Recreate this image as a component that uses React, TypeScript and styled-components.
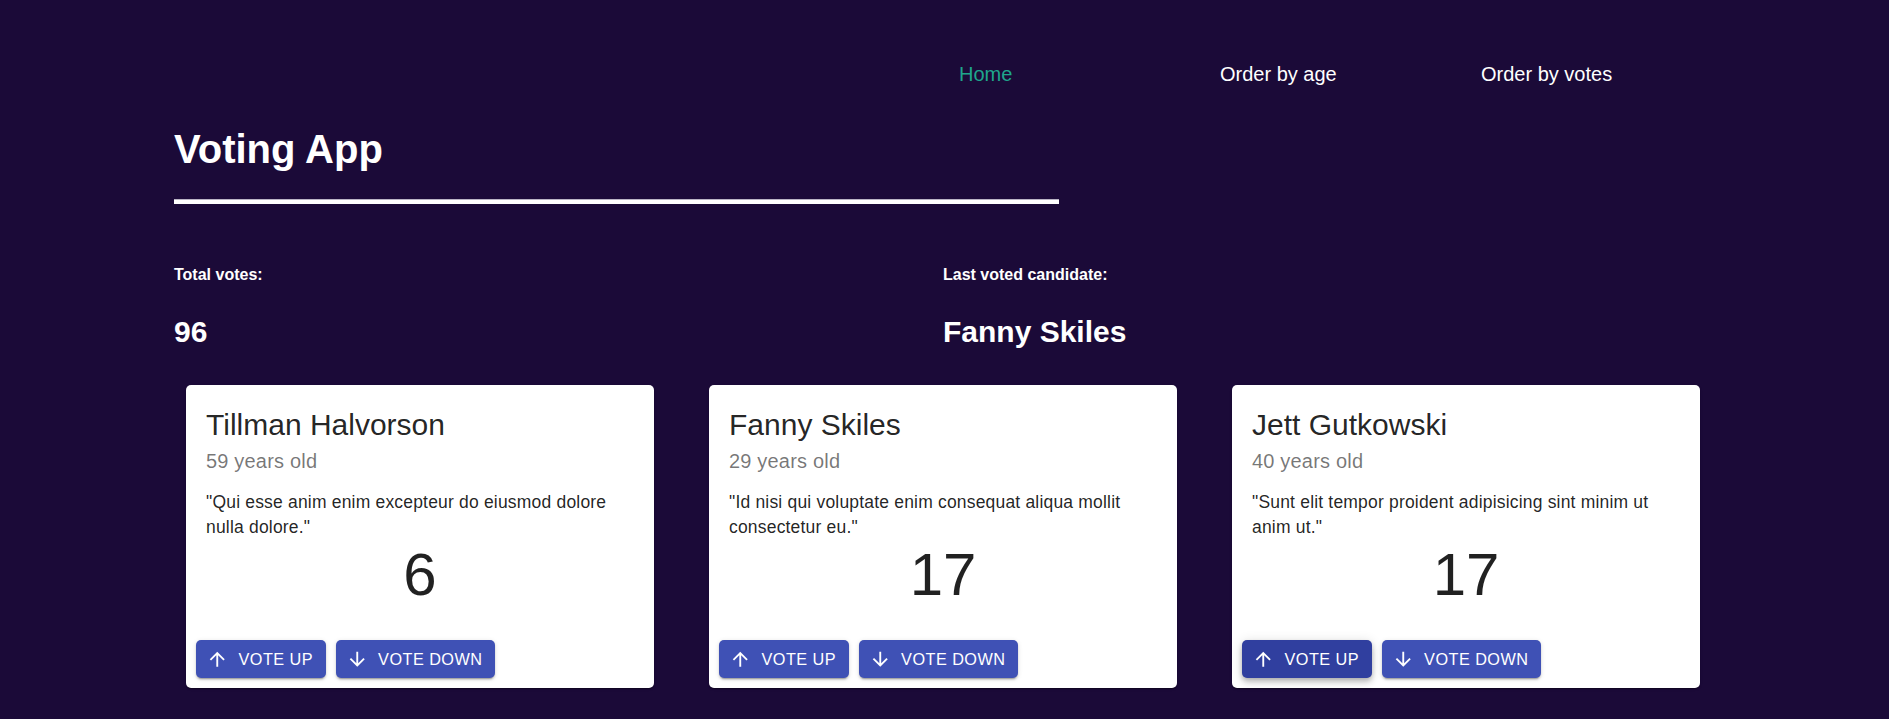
import React from 'react';
import styled, { createGlobalStyle } from 'styled-components';

const GlobalStyle = createGlobalStyle`
  html, body {
    margin: 0;
    padding: 0;
    background: #1b0a38;
  }
  body {
    font-family: "Liberation Sans", Arial, sans-serif;
    color: #fff;
  }
`;

interface Candidate {
  id: number;
  name: string;
  age: number;
  quote: string;
  votes: number;
}

const candidates: Candidate[] = [
  {
    id: 1,
    name: 'Tillman Halvorson',
    age: 59,
    quote: 'Qui esse anim enim excepteur do eiusmod dolore nulla dolore.',
    votes: 6,
  },
  {
    id: 2,
    name: 'Fanny Skiles',
    age: 29,
    quote: 'Id nisi qui voluptate enim consequat aliqua mollit consectetur eu.',
    votes: 17,
  },
  {
    id: 3,
    name: 'Jett Gutkowski',
    age: 40,
    quote: 'Sunt elit tempor proident adipisicing sint minim ut anim ut.',
    votes: 17,
  },
];

const totalVotes = 96;
const lastVoted = 'Fanny Skiles';

const Shell = styled.div`
  width: 1541px;
  margin: 0 auto;
  padding-top: 62px;
  padding-bottom: 30px;
`;

const TopBar = styled.div`
  display: grid;
  grid-template-columns: 769px 1fr;
`;

const Nav = styled.nav`
  display: flex;
`;

const NavLink = styled.a<{ $active?: boolean }>`
  width: 261px;
  padding-left: 16px;
  box-sizing: border-box;
  font-size: 20px;
  line-height: 24px;
  color: ${p => (p.$active ? '#1fa68c' : '#ffffff')};
  text-decoration: none;
  cursor: pointer;
`;

const Title = styled.h1`
  margin: 39px 0 0;
  font-size: 40px;
  line-height: 48px;
  font-weight: 700;
`;

const Rule = styled.div`
  width: 885px;
  height: 5px;
  margin-top: 26px;
  background: #ffffff;
  border-top: 1px solid #b9b4c4;
  box-sizing: border-box;
`;

const StatsRow = styled.div`
  display: grid;
  grid-template-columns: 769px 1fr;
  margin-top: 61px;
`;

const StatLabel = styled.h5`
  margin: 0;
  font-size: 16px;
  line-height: 20px;
  font-weight: 700;
`;

const StatValue = styled.h2`
  margin: 29px 0 0;
  font-size: 30px;
  line-height: 36px;
  font-weight: 700;
`;

const CardGrid = styled.div`
  display: grid;
  grid-template-columns: repeat(3, 468px);
  column-gap: 55px;
  padding-left: 12px;
  margin-top: 35px;
`;

const Card = styled.div`
  background: #ffffff;
  border-radius: 5px;
  overflow: hidden;
  color: rgba(0, 0, 0, 0.87);
  box-shadow: 0 2px 1px -1px rgba(0, 0, 0, 0.2), 0 1px 1px 0 rgba(0, 0, 0, 0.14),
    0 1px 3px 0 rgba(0, 0, 0, 0.12);
`;

const CardBody = styled.div`
  padding: 20px;
`;

const Name = styled.h5`
  margin: 0;
  font-size: 30px;
  line-height: 40px;
  font-weight: 400;
`;

const Age = styled.p`
  margin: 0 0 12px;
  font-size: 20px;
  line-height: 33px;
  letter-spacing: 0.00938em;
  color: rgba(0, 0, 0, 0.54);
`;

const Quote = styled.p`
  margin: 0;
  font-size: 17.5px;
  line-height: 25px;
  letter-spacing: 0.01071em;
`;

const Votes = styled.h3`
  margin: 0;
  text-align: center;
  font-size: 60px;
  line-height: 70px;
  font-weight: 400;
`;

const Actions = styled.div`
  display: flex;
  gap: 10px;
  padding: 10px;
`;

const VoteButton = styled.button<{ $hover?: boolean }>`
  display: inline-flex;
  align-items: center;
  padding: 5px 12.5px;
  border: 0;
  border-radius: 5px;
  font-family: "Liberation Sans", Arial, sans-serif;
  font-size: 16.25px;
  line-height: 28.4px;
  font-weight: 500;
  letter-spacing: 0.02857em;
  text-transform: uppercase;
  color: #ffffff;
  cursor: pointer;
  background: ${p => (p.$hover ? '#303f9f' : '#3f51b5')};
  box-shadow: ${p =>
    p.$hover
      ? '0 2px 5px -1px rgba(0,0,0,0.2), 0 5px 6px 0 rgba(0,0,0,0.14), 0 1px 12px 0 rgba(0,0,0,0.12)'
      : '0 3px 1px -2px rgba(0,0,0,0.2), 0 2px 2px 0 rgba(0,0,0,0.14), 0 1px 5px 0 rgba(0,0,0,0.12)'};
`;

const IconSlot = styled.span`
  display: inline-flex;
  margin-left: -2.5px;
  margin-right: 10px;

  svg {
    width: 22.5px;
    height: 22.5px;
    fill: currentColor;
  }
`;

const ArrowUp = () => (
  <svg viewBox="0 0 24 24" aria-hidden="true">
    <path d="M4 12l1.41 1.41L11 7.83V20h2V7.83l5.58 5.59L20 12l-8-8-8 8z" />
  </svg>
);

const ArrowDown = () => (
  <svg viewBox="0 0 24 24" aria-hidden="true">
    <path d="M20 12l-1.41-1.41L13 16.17V4h-2v12.17l-5.58-5.59L4 12l8 8 8-8z" />
  </svg>
);

const CandidateCard: React.FC<{ c: Candidate; hoverUp?: boolean }> = ({ c, hoverUp }) => (
  <Card>
    <CardBody>
      <Name>{c.name}</Name>
      <Age>{c.age} years old</Age>
      <Quote>&quot;{c.quote}&quot;</Quote>
      <Votes>{c.votes}</Votes>
    </CardBody>
    <Actions>
      <VoteButton $hover={hoverUp}>
        <IconSlot><ArrowUp /></IconSlot>
        Vote up
      </VoteButton>
      <VoteButton>
        <IconSlot><ArrowDown /></IconSlot>
        Vote down
      </VoteButton>
    </Actions>
  </Card>
);

export default function App() {
  return (
    <>
      <GlobalStyle />
      <Shell>
        <TopBar>
          <div />
          <Nav>
            <NavLink $active>Home</NavLink>
            <NavLink>Order by age</NavLink>
            <NavLink>Order by votes</NavLink>
          </Nav>
        </TopBar>
        <Title>Voting App</Title>
        <Rule />
        <StatsRow>
          <div>
            <StatLabel>Total votes:</StatLabel>
            <StatValue>{totalVotes}</StatValue>
          </div>
          <div>
            <StatLabel>Last voted candidate:</StatLabel>
            <StatValue>{lastVoted}</StatValue>
          </div>
        </StatsRow>
        <CardGrid>
          {candidates.map((c, i) => (
            <CandidateCard key={c.id} c={c} hoverUp={i === 2} />
          ))}
        </CardGrid>
      </Shell>
    </>
  );
}
